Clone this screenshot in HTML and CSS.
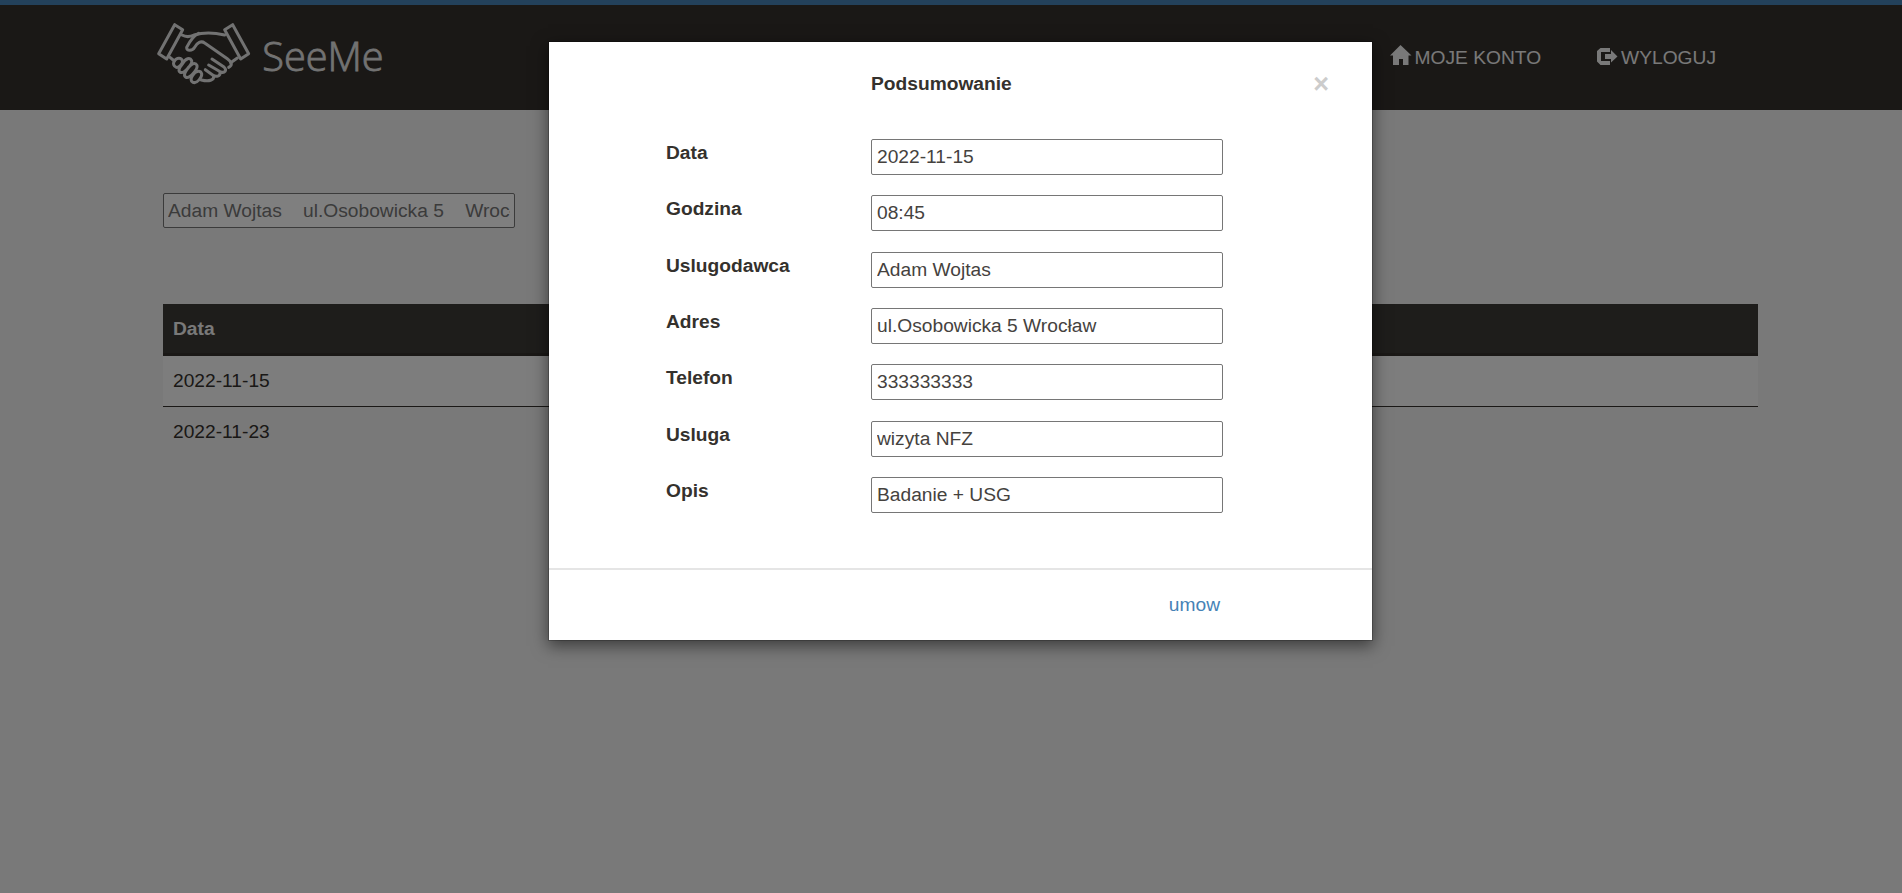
FILE: index.html
```html
<!DOCTYPE html>
<html lang="pl">
<head>
<meta charset="utf-8">
<title>SeeMe</title>
<link rel="stylesheet" href="styles.css">
</head>
<body>
<header class="navbar">
  <svg class="logo" viewBox="0 0 780 315" role="img" aria-label="SeeMe">
    <g class="logo-mark">
      <path d="M104 74L128 89L80 177L56 161Z"/>
      <path d="M278 74L326 161L302 177L254 89Z"/>
      <path d="M126 105C138 112 150 111 162 105C190 97 218 97 254 105"/>
      <path d="M176 100C158 108 147 128 140 142C139 154 157 154 164 142C172 128 183 121 194 129L262 176C276 186 278 196 266 202"/>
      <path d="M292 174L272 188M90 172L103 183"/>
      <path d="M216 177L252 201C262 211 254 220 242 216L206 195M240 217C242 230 228 232 218 225L196 209M221 229C222 240 208 246 184 240"/>
      <path d="M103 183C110 172 124 172 127 182C130 190 116 204 109 202C101 199 98 191 103 183ZM127 192C137 174 150 171 155 182C158 193 132 222 121 217C113 213 118 203 127 192ZM140 210C152 190 166 186 171 196C174 207 150 236 138 232C130 228 134 219 140 210ZM158 226C168 210 182 212 185 221C187 231 171 252 159 247C151 243 152 235 158 226Z"/>
    </g>
    <text class="logo-text" x="367" y="212" textLength="364" lengthAdjust="spacingAndGlyphs">SeeMe</text>
  </svg>
  <nav class="menu">
    <a class="menu-link" href="#"><svg class="icon" viewBox="0 0 22 20"><path d="M10.500 0L21.500 10.500H18.500V20H13V14H9V20H3V10.500H0Z"/></svg>MOJE KONTO</a>
    <a class="menu-link" href="#"><svg class="icon" viewBox="0 0 22 20"><path d="M14 3H4.500L1 6V16.500L4.500 20H14V16H5V7H14ZM15 5L21.500 11.500L15 17.500V14H9V9H15Z"/></svg>WYLOGUJ</a>
  </nav>
</header>
<main class="content">
  <input class="field search" type="text" value="Adam Wojtas &nbsp;&nbsp; ul.Osobowicka 5 &nbsp;&nbsp; Wrocław">
  <table class="visits">
    <thead><tr><th>Data</th></tr></thead>
    <tbody>
      <tr><td>2022-11-15</td></tr>
      <tr><td>2022-11-23</td></tr>
    </tbody>
  </table>
</main>
<div class="backdrop">
  <section class="modal">
    <div class="modal-head">
      <h4 class="modal-title">Podsumowanie</h4>
      <button class="close" type="button" aria-label="Zamknij">×</button>
    </div>
    <div class="modal-body">
      <label class="row"><span>Data</span><input class="field" value="2022-11-15"></label>
      <label class="row"><span>Godzina</span><input class="field" value="08:45"></label>
      <label class="row"><span>Uslugodawca</span><input class="field" value="Adam Wojtas"></label>
      <label class="row"><span>Adres</span><input class="field" value="ul.Osobowicka 5 Wrocław"></label>
      <label class="row"><span>Telefon</span><input class="field" value="333333333"></label>
      <label class="row"><span>Usluga</span><input class="field" value="wizyta NFZ"></label>
      <label class="row"><span>Opis</span><input class="field" value="Badanie + USG"></label>
    </div>
    <div class="modal-foot"><a class="book" href="#">umow</a></div>
  </section>
</div>
</body>
</html>
```
FILE: styles.css
```css
* { box-sizing: border-box; }
body {
  margin: 0;
  height: 893px;
  overflow: hidden;
  background: #f2f2f2;
  color: #34312d;
  font: 19.2px/27px "Liberation Sans", Arial, sans-serif;
}
.navbar {
  display: flex;
  justify-content: space-between;
  height: 110px;
  padding: 0 186px 0 140px;
  border-top: 5px solid #4682b6;
  background: #34312d;
}
.logo { width: 260px; height: 105px; margin-top: -5px; }
.logo-mark { fill: none; stroke: #e4e4e4; stroke-width: 9; stroke-linecap: round; stroke-linejoin: round; }
.logo-text { fill: #e4e4e4; stroke: #e4e4e4; stroke-width: 2.5; font: 300 124px "Open Sans", "Noto Sans", sans-serif; }
.menu { display: flex; gap: 55px; padding-top: 39px; }
.menu-link { display: flex; gap: 3px; height: 27px; color: #f2f2f2; text-decoration: none; }
.icon { width: 22px; height: 20px; margin-top: 1px; fill: #f2f2f2; }
.content { padding: 83px 144px 0 163px; }
.field {
  display: block;
  width: 352px;
  height: 36px;
  padding: 1px 5px;
  border: 1px solid #767676;
  border-radius: 2px;
  background: #fff;
  color: #45423e;
  font: 19.2px "Liberation Sans", Arial, sans-serif;
}
.search { height: 35px; padding: 1px 4px; color: #767676; }
.visits { width: 100%; margin-top: 76px; border-collapse: separate; border-spacing: 0; }
.visits th { height: 52px; padding: 0 10px 1px; border-bottom: 3px solid #34312d; background: #3c3a36; color: #f2f2f2; text-align: left; }
.visits td { height: 51px; padding: 0 10px 2px; color: #34312d; }
.visits tbody tr:first-child td { border-bottom: 1px solid #34312d; background: #fbfbfb; }
.backdrop { position: absolute; inset: 0; padding-top: 41px; background: rgba(0, 0, 0, .5); }
.modal {
  width: 825px;
  height: 600px;
  margin-left: 548px;
  border: 1px solid rgba(0, 0, 0, .2);
  background: #fff;
  background-clip: padding-box;
  box-shadow: 0 5px 15px rgba(0, 0, 0, .5);
}
.modal-head { display: flex; justify-content: space-between; height: 97px; padding: 28px 43px 0 322px; }
.modal-title { margin: 0; font-size: 19.2px; }
.close { align-self: flex-start; padding: 0; border: 0; background: none; color: #ccc; font: bold 27px/28px "Liberation Sans", Arial, sans-serif; }
.modal-body { display: grid; grid-auto-rows: 56.33px; height: 429px; padding-left: 117px; }
.row { display: grid; grid-template-columns: 205px 352px; align-items: start; line-height: 27px; font-weight: bold; }
.modal-foot { display: flex; justify-content: flex-end; height: 72px; padding: 21px 152px 0 0; border-top: 2px solid #e5e5e5; }
.book { color: #4682b6; text-decoration: none; }
```
